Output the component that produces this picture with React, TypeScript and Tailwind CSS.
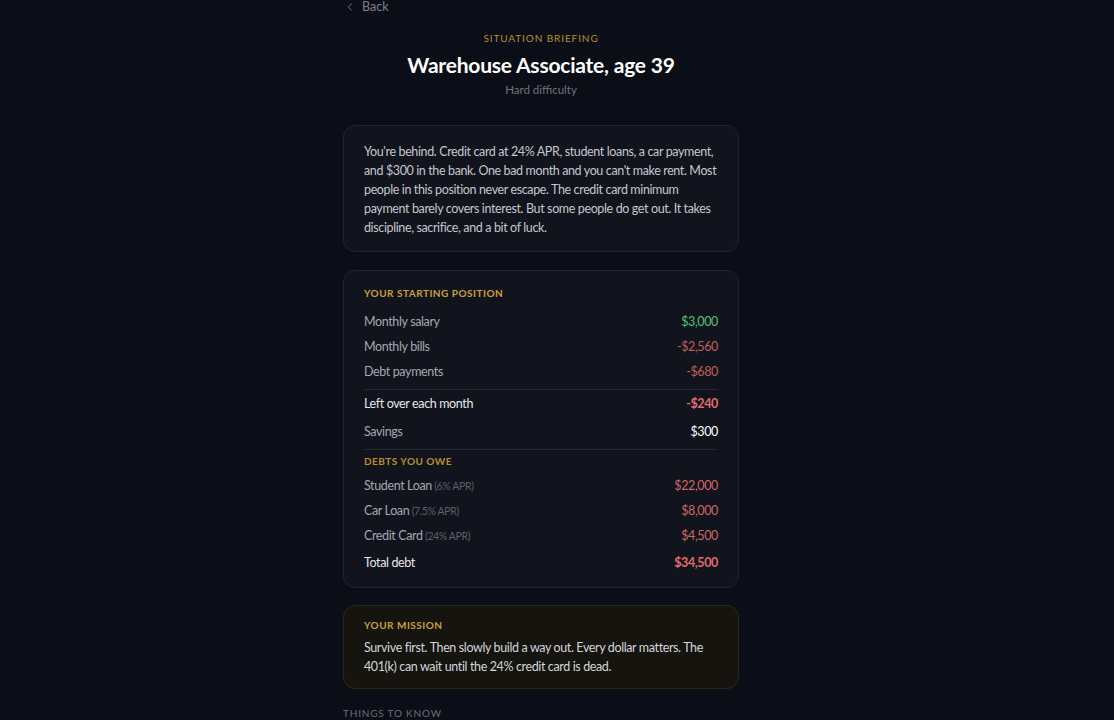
import React from "react";

const font = { fontFamily: "Lato, 'Open Sans', sans-serif" };

function Row({ label, sub, value, valueClass }: { label: string; sub?: string; value: string; valueClass: string }) {
  return (
    <div className="flex items-center justify-between h-[25px]">
      <span className="text-[#a3a7b0]">
        {label}
        {sub && <span className="text-[10.5px] text-[#5b5f69]"> {sub}</span>}
      </span>
      <span className={valueClass}>{value}</span>
    </div>
  );
}

export default function App() {
  return (
    <div className="min-h-screen w-full bg-[#0b0e17] text-[12.5px] tracking-[-0.03em]" style={font}>
      <div className="flex justify-center pr-[32px]">
        <div className="w-[396px] flex flex-col">
          <div className="flex items-center gap-[7px] -mt-[3px] h-[20px] text-[#7d818b] text-[12.5px] tracking-normal">
            <svg width="10" height="10" viewBox="0 0 24 24" fill="none" stroke="currentColor" strokeWidth="2.2" strokeLinecap="round" strokeLinejoin="round" className="ml-[2px]"><path d="M16 20l-8-8 8-8" /></svg>
            <span>Back</span>
          </div>
          <div className="flex flex-col items-center mt-[14px]">
            <div className="text-[10px] tracking-[0.09em] text-[#b8902f] leading-[14px]">SITUATION BRIEFING</div>
            <div className="text-[21px] font-bold text-white leading-[28px] mt-[6px] tracking-[-0.01em]">Warehouse Associate, age 39</div>
            <div className="text-[11.5px] text-[#6f737d] leading-[16px] mt-[3px] tracking-normal">Hard difficulty</div>
          </div>

          <div className="mt-[27px] rounded-xl border border-[#20242d] bg-[#11141c] px-5 pt-[16px] pb-[14px] leading-[19px] text-[#c4c7ce]">
            You're behind. Credit card at 24% APR, student loans, a car payment, and $300 in the bank. One bad month and you can't make rent. Most people in this position never escape. The credit card minimum payment barely covers interest. But some people do get out. It takes discipline, sacrifice, and a bit of luck.
          </div>

          <div className="mt-[18px] rounded-xl border border-[#20242d] bg-[#11141c] px-5 pt-[15px] pb-[9px]">
            <div className="text-[10px] font-bold tracking-[0.05em] text-[#c9a03a] leading-[14px] mb-[10px]">YOUR STARTING POSITION</div>
            <Row label="Monthly salary" value="$3,000" valueClass="text-[#4ec77a]" />
            <Row label="Monthly bills" value="-$2,560" valueClass="text-[#c25d5d]" />
            <Row label="Debt payments" value="-$680" valueClass="text-[#c25d5d]" />
            <div className="border-t border-[#232731] mt-[4px] mb-[2px]" />
            <div className="flex items-center justify-between h-[25px]">
              <span className="text-[#e6e7ea]">Left over each month</span>
              <span className="text-[#e36b6b] font-bold">-$240</span>
            </div>
            <div className="flex items-center justify-between h-[31px]">
              <span className="text-[#a3a7b0]">Savings</span>
              <span className="text-white">$300</span>
            </div>
            <div className="border-t border-[#232731] mt-[1px]" />
            <div className="text-[10px] font-bold tracking-[0.05em] text-[#b8902f] leading-[14px] mt-[4px] mb-[6px]">DEBTS YOU OWE</div>
            <Row label="Student Loan" sub="(6% APR)" value="$22,000" valueClass="text-[#d16565]" />
            <Row label="Car Loan" sub="(7.5% APR)" value="$8,000" valueClass="text-[#d16565]" />
            <Row label="Credit Card" sub="(24% APR)" value="$4,500" valueClass="text-[#d16565]" />
            <div className="flex items-center justify-between h-[29px]">
              <span className="text-[#e6e7ea]">Total debt</span>
              <span className="text-[#e06b6b] font-bold">$34,500</span>
            </div>
          </div>

          <div className="mt-[17px] rounded-xl border border-[#2d2618] bg-[#15140f] px-5 pt-[12px] pb-[12px]">
            <div className="text-[10px] font-bold tracking-[0.05em] text-[#c9a03a] leading-[14px] mb-[6px]">YOUR MISSION</div>
            <div className="leading-[19px] text-[#d3d5da]">Survive first. Then slowly build a way out. Every dollar matters. The 401(k) can wait until the 24% credit card is dead.</div>
          </div>

          <div className="mt-[17px] text-[10px] leading-[14px] tracking-[0.08em] text-[#6b6f79]">THINGS TO KNOW</div>
          <div className="h-[200px]" />
        </div>
      </div>
    </div>
  );
}
